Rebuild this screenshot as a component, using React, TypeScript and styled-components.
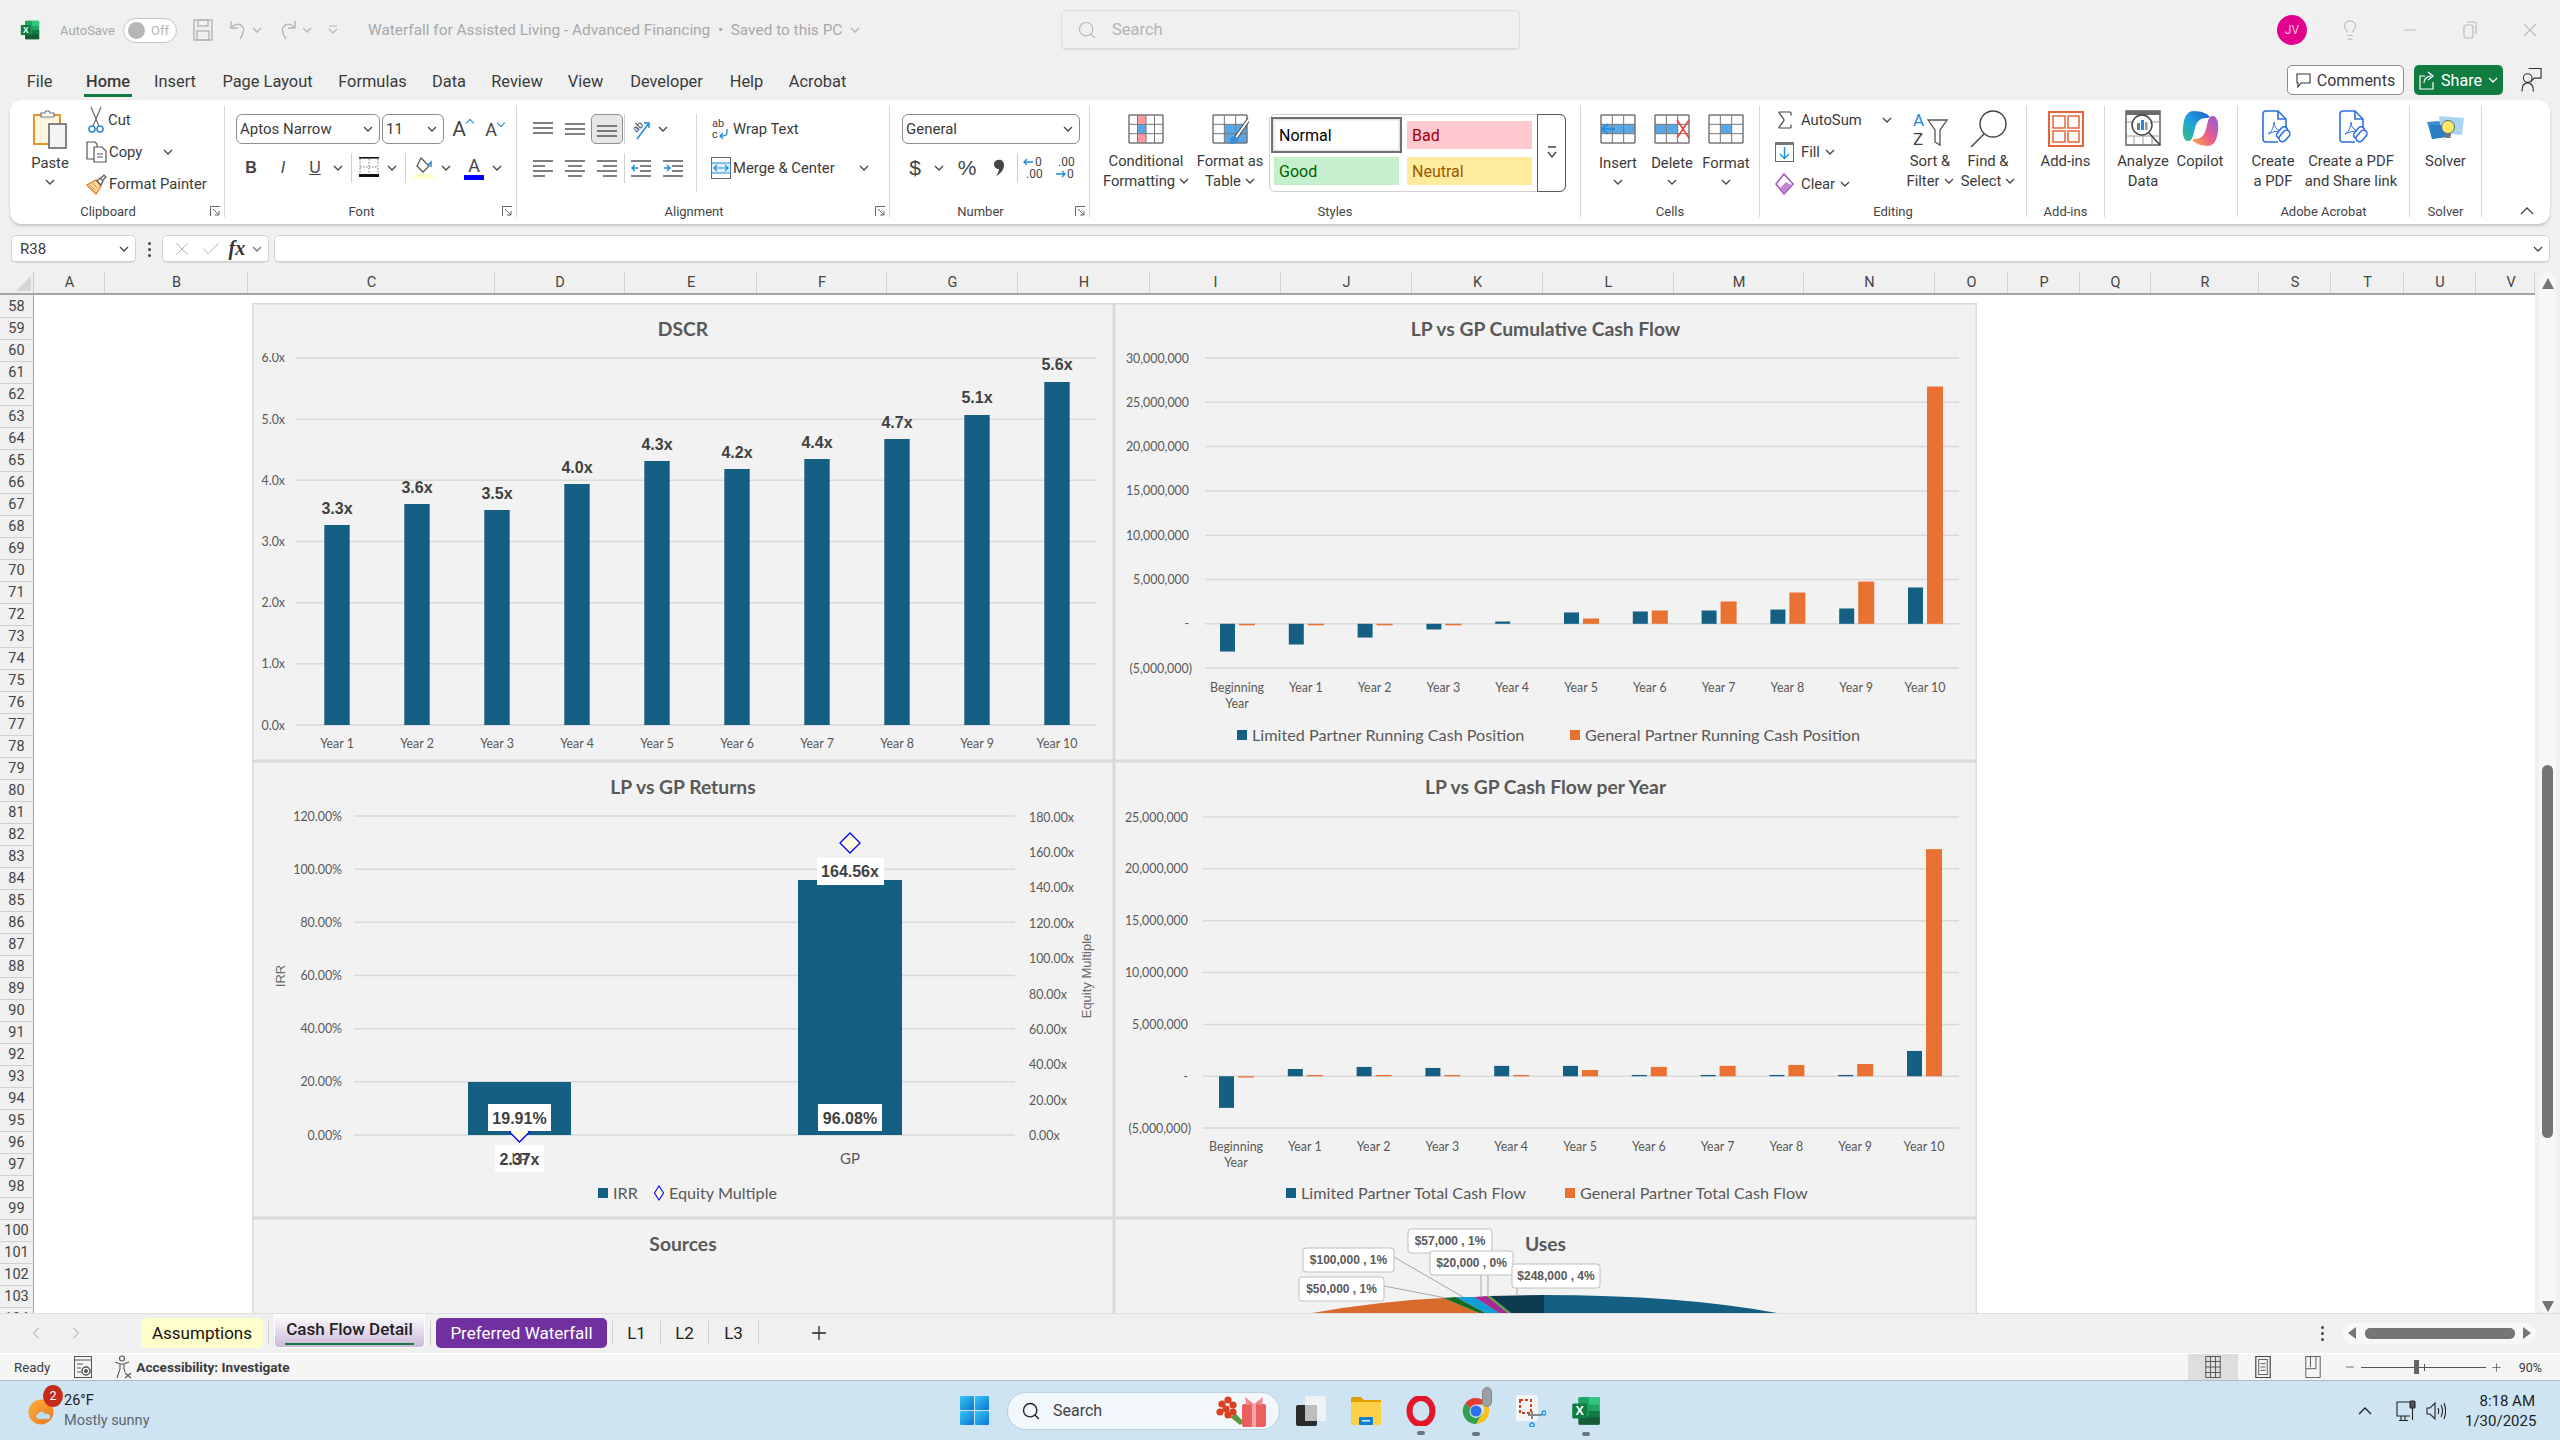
import React from 'react';
import styled, { createGlobalStyle } from 'styled-components';
import { Search, X, Check, Minus, Plus, ChevronLeft, ChevronRight, Lightbulb, Sigma } from 'lucide-react';

const ui = '"Roboto", "Liberation Sans", sans-serif';
const chartFont = '"Lato", "Liberation Sans", sans-serif';
const labelFont = '"Liberation Sans", Arial, sans-serif';

const colors = {
  chrome: '#f0f0f0',
  ink: '#3b3b3b',
  faded: '#a8a8a8',
  line: '#d4d4d4',
  blue: '#156082',
  orange: '#e97132',
  panel: '#f2f2f2',
  grid: '#d9d9d9',
  chartText: '#595959',
  green: '#107c41',
};

const GlobalStyle = createGlobalStyle`
  html, body { margin: 0; padding: 0; background: ${colors.chrome}; }
  * { box-sizing: border-box; }
`;

/* ---------- icons ---------- */

const Chev: React.FC<{ color?: string }> = ({ color = '#444' }) => (
  <svg width="10" height="6" viewBox="0 0 10 6" fill="none">
    <path d="M1 1l4 4 4-4" stroke={color} strokeWidth="1.3" />
  </svg>
);

const ExcelLogo: React.FC<{ size: number }> = ({ size }) => (
  <svg width={size} height={size} viewBox="0 0 24 24">
    <rect x="6" y="1" width="17" height="22" rx="1.5" fill="#21a366" />
    <rect x="14" y="1" width="9" height="6" fill="#33c481" />
    <rect x="6" y="1" width="8" height="6" fill="#21a366" />
    <rect x="14" y="12" width="9" height="6" fill="#107c41" />
    <rect x="6" y="17" width="17" height="6" rx="1" fill="#185c37" />
    <rect x="1" y="6" width="12" height="12" rx="1" fill="#107c41" />
    <text x="7" y="15.5" fill="#fff" fontSize="10" fontWeight="700" fontFamily={labelFont} textAnchor="middle">X</text>
  </svg>
);

const SaveIcon = () => (
  <svg width="20" height="22" viewBox="0 0 20 22" fill="none" stroke="#b5b5b5" strokeWidth="1.4">
    <rect x="1" y="1" width="18" height="20" />
    <rect x="5" y="1" width="10" height="6" />
    <rect x="4" y="12" width="12" height="9" />
  </svg>
);

const UndoIcon: React.FC<{ flip?: boolean }> = ({ flip }) => (
  <svg width="18" height="22" viewBox="0 0 18 22" fill="none" stroke="#b5b5b5" strokeWidth="1.4">
    <g transform={flip ? 'translate(18 0) scale(-1 1)' : undefined}>
      <path d="M2 2v7h7" />
      <path d="M2 9c3-4 8-5 11-2 3 3 2 7-2 13" />
    </g>
  </svg>
);

const CustomizeIcon = () => (
  <svg width="10" height="10" viewBox="0 0 10 10" fill="none" stroke="#b5b5b5" strokeWidth="1.2">
    <path d="M1 1h8M1 4l4 4 4-4" />
  </svg>
);

const ClipboardIcon = () => (
  <svg width="36" height="40" viewBox="0 0 36 40">
    <rect x="2" y="6" width="26" height="29" fill="#fff6df" stroke="#e8942c" strokeWidth="2" />
    <path d="M9 7V4h4c0-3 5-3 5 0h4v4H9z" fill="#fff" stroke="#777" strokeWidth="1.2" />
    <rect x="17" y="15" width="17" height="24" fill="#f4f4f4" stroke="#666" strokeWidth="1.6" />
  </svg>
);

const CutIcon = () => (
  <svg width="16" height="28" viewBox="0 0 16 28" fill="none">
    <path d="M3 1l8 19M13 1L5 20" stroke="#666" strokeWidth="1.2" />
    <circle cx="4" cy="23" r="3" stroke="#2b88d8" strokeWidth="1.6" />
    <circle cx="12" cy="23" r="3" stroke="#2b88d8" strokeWidth="1.6" />
  </svg>
);

const CopyIcon = () => (
  <svg width="21" height="22" viewBox="0 0 21 22" fill="#fff" stroke="#555" strokeWidth="1.2">
    <path d="M1 1h8l2 2v15H1z" />
    <path d="M8 6h8l4 4v11H8z" />
    <path d="M11 13h6M11 16h6" />
  </svg>
);

const PainterIcon = () => (
  <svg width="22" height="22" viewBox="0 0 22 22" fill="none">
    <path d="M1 12l9-5 5 6-5 8z" fill="#fbd9a6" stroke="#e8842c" strokeWidth="1.4" />
    <path d="M4 12l5 5M7 10l4 5" stroke="#e8842c" />
    <path d="M11 8l3-3 3 3-2 4zM15 5l3-3 2 2-3 3" fill="#fff" stroke="#555" strokeWidth="1.2" />
  </svg>
);

const Launcher = () => (
  <svg width="11" height="11" viewBox="0 0 11 11" fill="none" stroke="#666">
    <path d="M.5 10V.5H10" />
    <path d="M3 3l6 6M9 5v4H5" />
  </svg>
);

const BorderIcon = () => (
  <svg width="20" height="22" viewBox="0 0 20 22" fill="none">
    <path d="M1 1h18M1 10h18M10 2v15M1 2v15M19 2v15" stroke="#777" strokeDasharray="1.5 1.5" />
    <rect x="0" y="17" width="20" height="3" fill="#111" />
    <rect x="0" y="0" width="20" height="1.5" fill="#111" />
  </svg>
);

const FillIcon = () => (
  <svg width="20" height="24" viewBox="0 0 20 24" fill="none">
    <path d="M7 2l8 8-6 6-6-6z" stroke="#555" strokeWidth="1.3" fill="#fff" />
    <path d="M14 9l3-3v5" stroke="#2b88d8" strokeWidth="1.5" />
    <rect x="0" y="18" width="20" height="5" fill="#ffffc8" />
  </svg>
);

const AlignLines: React.FC<{ rows: [number, number][]; arrow?: 'in' | 'out' }> = ({ rows, arrow }) => (
  <svg width="20" height="20" viewBox="0 0 20 20" fill="none">
    {rows.map(([y, kind], i) => {
      const x1 = kind === 1 ? 0 : kind === 2 ? 3 : kind === 3 ? 6 : kind === 4 ? 9 : 0;
      const x2 = kind === 1 ? 12 : kind === 2 ? 17 : 20;
      return <path key={i} d={`M${x1} ${y}H${x2}`} stroke="#555" strokeWidth="1.5" />;
    })}
    {arrow === 'out' && <path d="M7 10H1M4 7l-3 3 3 3" stroke="#1e8ad8" strokeWidth="1.4" />}
    {arrow === 'in' && <path d="M1 10h6M4 7l3 3-3 3" stroke="#1e8ad8" strokeWidth="1.4" />}
  </svg>
);

const OrientIcon = () => (
  <svg width="24" height="26" viewBox="0 0 24 26" fill="none">
    <text x="9" y="14" fontSize="10" fontFamily={ui} fill="#444" transform="rotate(-45 9 11)" textAnchor="middle">ab</text>
    <path d="M8 23L20 7M15 7h5v5" stroke="#1e8ad8" strokeWidth="1.5" />
  </svg>
);

const WrapIcon = () => (
  <svg width="20" height="26" viewBox="0 0 20 26" fill="none">
    <text x="1" y="11" fontSize="11" fontFamily={ui} fill="#444">ab</text>
    <text x="1" y="22" fontSize="11" fontFamily={ui} fill="#444">c</text>
    <path d="M16 13v4c0 3-3 3-6 3M12 17l-3 3 3 3" stroke="#1e8ad8" strokeWidth="1.3" />
  </svg>
);

const MergeIcon = () => (
  <svg width="20" height="22" viewBox="0 0 20 22" fill="none">
    <rect x=".5" y=".5" width="19" height="21" fill="#fff" stroke="#666" />
    <rect x=".5" y="6" width="19" height="10" fill="#e1f0fb" stroke="#1e8ad8" />
    <path d="M3 11h14M6 8l-3 3 3 3M14 8l3 3-3 3" stroke="#1e8ad8" strokeWidth="1.2" />
  </svg>
);

const CommaIcon = () => (
  <svg width="12" height="18" viewBox="0 0 12 18">
    <path d="M5 1c4-1 6 2 6 5 0 5-4 9-8 11 2-3 3-5 3-7-3 0-5-2-5-5 0-2 2-4 4-4z" fill="#444" />
  </svg>
);

type GridCell = [number, number, string];
const SheetGlyph: React.FC<{ cells?: GridCell[]; w?: number; h?: number; cols?: number; children?: React.ReactNode }> = ({
  cells = [], w = 34, h = 28, cols = 5, children,
}) => {
  const cw = w / cols;
  const rh = h / 3;
  return (
    <svg width={w + 4} height={h + 2} viewBox={`-2 -1 ${w + 4} ${h + 2}`} fill="none">
      <rect width={w} height={h} fill="#fff" />
      {cells.map(([c, r, fill], i) => (
        <rect key={i} x={c * cw} y={r * rh} width={cw} height={rh} fill={fill} />
      ))}
      {Array.from({ length: cols + 1 }, (_, i) => (
        <path key={i} d={`M${i * cw} 0V${h}`} stroke="#777" strokeWidth={i === 0 || i === cols ? 1.5 : 1} />
      ))}
      {[0, 1, 2, 3].map((i) => (
        <path key={i} d={`M0 ${i * rh}H${w}`} stroke="#777" strokeWidth={i === 0 || i === 3 ? 1.5 : 1} />
      ))}
      {children}
    </svg>
  );
};

const BrushOverlay = () => (
  <g>
    <path d="M36 4L22 24" stroke="#555" strokeWidth="4" />
    <path d="M36 4L22 24" stroke="#fff" strokeWidth="2" />
    <path d="M22 21c-4 0-6 3-5 8 4 1 8-1 9-5z" fill="#3f8fd8" />
  </g>
);

const AddInsIcon = () => (
  <svg width="36" height="36" viewBox="0 0 36 36" fill="none" stroke="#e8653a">
    <rect x="1" y="1" width="34" height="34" strokeWidth="2" fill="#fff" />
    <rect x="5" y="5" width="12" height="12" strokeWidth="1.5" />
    <rect x="20" y="5" width="11" height="12" strokeWidth="1.5" />
    <rect x="5" y="20" width="12" height="11" strokeWidth="1.5" />
    <rect x="20" y="20" width="11" height="11" strokeWidth="1.5" />
  </svg>
);

const AnalyzeIcon = () => (
  <svg width="37" height="37" viewBox="0 0 37 37" fill="none">
    <rect x="1" y="1" width="34" height="34" fill="#fff" stroke="#6b6b6b" strokeWidth="1.6" />
    <rect x="1" y="1" width="34" height="4" fill="#6b6b6b" />
    <path d="M1 12h34M1 26h34M9 26v9M18 26v9M27 26v9" stroke="#999" />
    <circle cx="17" cy="15" r="10" fill="#fff" stroke="#444" strokeWidth="1.5" />
    <rect x="12" y="13" width="3" height="7" fill="#777" />
    <rect x="16" y="10" width="3" height="10" fill="#2b88d8" />
    <rect x="20" y="12" width="2.5" height="8" fill="#999" />
    <path d="M24 23l11 12" stroke="#444" strokeWidth="1.6" />
  </svg>
);

const CopilotIcon = () => (
  <svg width="37" height="37" viewBox="0 0 37 37">
    <defs>
      <linearGradient id="cpA" x1="0" y1="1" x2="1" y2="0">
        <stop offset="0" stopColor="#36c17a" />
        <stop offset=".5" stopColor="#1f9fe0" />
        <stop offset="1" stopColor="#2355c8" />
      </linearGradient>
      <linearGradient id="cpB" x1="0" y1="1" x2="1" y2="0">
        <stop offset="0" stopColor="#f6b73c" />
        <stop offset=".45" stopColor="#ef5f8a" />
        <stop offset="1" stopColor="#8a5be0" />
      </linearGradient>
    </defs>
    <path d="M12 1c-7 0-10 6-11 16-1 8 1 14 5 14 5 0 5-6 7-13 2-7 5-10 12-10l3-1C26 4 20 1 12 1z" fill="url(#cpA)" />
    <path d="M25 36c7 0 10-6 11-15 1-8-1-15-5-15-5 0-5 6-7 13-2 7-5 10-12 10l-2 1c3 3 9 6 15 6z" fill="url(#cpB)" />
  </svg>
);

const PdfLinkIcon = () => (
  <svg width="32" height="37" viewBox="0 0 32 37" fill="none" stroke="#2d6fe0" strokeWidth="1.6">
    <path d="M16 32H4c-2 0-3-1-3-3V4c0-2 1-3 3-3h12l8 8v9" fill="#fff" />
    <path d="M16 1v8h8" />
    <path d="M6 24c4-2 6-8 6-12 0 5 3 8 7 9-5 0-9 1-13 3z" strokeWidth="1" />
    <rect x="17" y="16" width="7" height="13" rx="3.5" transform="rotate(40 20 22)" fill="#fff" />
    <rect x="22" y="24" width="7" height="13" rx="3.5" transform="rotate(40 25 30) translate(-5 -2)" fill="#fff" />
  </svg>
);

const SolverIcon = () => (
  <svg width="38" height="28" viewBox="0 0 38 28">
    <path d="M0 7l12-1 2 2 10-1v14l-19 3z" fill="#3d8fd1" />
    <path d="M12 1l25 2-2 17-21-2z" fill="#a9d4f2" />
    <path d="M3 10h17v12L5 24z" fill="#2b7cc2" />
    <circle cx="21" cy="12" r="6.5" fill="#fbe96a" stroke="#666" />
    <rect x="18.5" y="18" width="5" height="5" fill="#777" />
  </svg>
);

const SortIcon = () => (
  <svg width="36" height="37" viewBox="0 0 36 37" fill="none">
    <text x="1" y="16" fontSize="17" fontFamily={ui} fill="#1e8ad8">A</text>
    <text x="1" y="35" fontSize="17" fontFamily={ui} fill="#444">Z</text>
    <path d="M16 10h19l-7 10v15l-5-3V20z" stroke="#555" strokeWidth="1.3" fill="#fff" />
  </svg>
);

const FindIcon = () => (
  <svg width="37" height="38" viewBox="0 0 37 38" fill="none" stroke="#444" strokeWidth="1.4">
    <circle cx="23" cy="14" r="13" />
    <path d="M14 24L1 37" />
  </svg>
);

const FillDownIcon = () => (
  <svg width="19" height="20" viewBox="0 0 19 20" fill="none">
    <rect x=".5" y=".5" width="18" height="19" stroke="#666" fill="#fff" />
    <rect x="0" y="0" width="19" height="3" fill="#777" />
    <path d="M9.5 5v11M5 12l4.500 4.500L14 12" stroke="#1e8ad8" strokeWidth="1.4" />
  </svg>
);

const ClearIcon = () => (
  <svg width="19" height="22" viewBox="0 0 19 22">
    <path d="M9 1l9 10-9 10L1 11z" fill="#fff" stroke="#a14fb4" strokeWidth="1.5" />
    <path d="M5 15l6-6 5 3-7 8z" fill="#c587d4" />
  </svg>
);

const CommentIcon: React.FC<{ size?: number }> = ({ size = 15 }) => (
  <svg width={size} height={size} viewBox="0 0 15 15" fill="none" stroke="#333" strokeWidth="1.1">
    <path d="M1 1h13v9H5l-3 4v-4H1z" />
  </svg>
);

const ShareIcon = () => (
  <svg width="16" height="20" viewBox="0 0 16 20" fill="none" stroke="#fff" strokeWidth="1.2">
    <path d="M6 6H1v13h13v-7" />
    <path d="M5 13c0-4 3-7 7-7M9 2l5 4-5 4" />
  </svg>
);

const PersonCommentIcon = () => (
  <svg width="22" height="26" viewBox="0 0 22 26" fill="none" stroke="#333" strokeWidth="1.2">
    <path d="M8 1h13v10h-7l-3 3v-3" />
    <circle cx="7" cy="11" r="4.5" fill="#f0f0f0" />
    <path d="M1 25c0-5 2-9 6-9s6 4 6 9" />
  </svg>
);

const MacroIcon = () => (
  <svg width="18" height="22" viewBox="0 0 18 22" fill="none" stroke="#555">
    <rect x=".5" y=".5" width="17" height="21" />
    <path d="M0 4h18M3 8h6M3 12h4M3 16h4" />
    <circle cx="12" cy="15" r="4" strokeWidth="1.5" />
    <circle cx="12" cy="15" r="1.5" fill="#555" />
  </svg>
);

const AccessIcon = () => (
  <svg width="18" height="24" viewBox="0 0 18 24" fill="none" stroke="#555" strokeWidth="1.1">
    <circle cx="8" cy="3.5" r="2.5" />
    <path d="M1 7l5 2h4l5-2M6 9v5l-3 9M10 9v5l1 3" />
    <path d="M11 18l6 5M17 18l-6 5" />
  </svg>
);

const ViewGrid = () => (
  <svg width="18" height="26" viewBox="0 0 18 26" fill="none" stroke="#444">
    <rect x=".5" y=".5" width="17" height="25" />
    <path d="M6 0v26M12 0v26M0 6.5h18M0 13h18M0 19.5h18" />
  </svg>
);

const ViewPage = () => (
  <svg width="18" height="26" viewBox="0 0 18 26" fill="none" stroke="#444">
    <rect x=".5" y=".5" width="17" height="25" strokeWidth="1.4" />
    <rect x="4" y="4" width="10" height="18" />
    <path d="M6 9h6M6 13h6M6 17h6" />
  </svg>
);

const ViewBreak = () => (
  <svg width="18" height="26" viewBox="0 0 18 26" fill="none" stroke="#444">
    <path d="M.5 15V.5h17v25H.5V15h12V0M6 0v13" />
  </svg>
);

const WeatherIcon = () => (
  <svg width="28" height="28" viewBox="0 0 28 28">
    <defs>
      <linearGradient id="sun" x1="0" y1="0" x2="1" y2="1">
        <stop offset="0" stopColor="#fcb13c" />
        <stop offset="1" stopColor="#f0761c" />
      </linearGradient>
    </defs>
    <circle cx="13" cy="15" r="12.5" fill="url(#sun)" />
    <path d="M11 22c-3 0-4-4-1-5 1-3 6-3 7 0 3-1 6 1 5 4-1 1-2 1-3 1z" fill="#c3def2" stroke="#8db4d4" strokeWidth=".5" />
  </svg>
);

const WinIcon = () => (
  <svg width="29" height="29" viewBox="0 0 29 29">
    <defs>
      <linearGradient id="win" x1="0" y1="0" x2="1" y2="1">
        <stop offset="0" stopColor="#36c9f6" />
        <stop offset="1" stopColor="#0a74d4" />
      </linearGradient>
    </defs>
    <rect x="0" y="0" width="14" height="14" fill="url(#win)" rx="1" />
    <rect x="15" y="0" width="14" height="14" fill="url(#win)" rx="1" />
    <rect x="0" y="15" width="14" height="14" fill="url(#win)" rx="1" />
    <rect x="15" y="15" width="14" height="14" fill="url(#win)" rx="1" />
  </svg>
);

const GiftFlowers = () => (
  <svg width="50" height="32" viewBox="0 0 50 32">
    <path d="M14 22l10 8 4-3-8-8z" fill="#5a9a3a" />
    {[[6, 9], [12, 5], [17, 10], [10, 14], [4, 17], [17, 17], [12, 20]].map(([x, y], i) => (
      <circle key={i} cx={x} cy={y} r="3.6" fill="#d8401f" />
    ))}
    <rect x="26" y="9" width="24" height="23" rx="2" fill="#ea6060" />
    <rect x="36" y="9" width="4" height="23" fill="#f5a5a5" />
    <path d="M38 9l-9-7 1 8zM38 9l9-7-1 8z" fill="#f08a8a" />
  </svg>
);

const TaskView = () => (
  <svg width="30" height="30" viewBox="0 0 30 30">
    <rect x="0" y="9" width="21" height="21" rx="2" fill="#2b2b2b" />
    <rect x="9" y="0" width="21" height="25" rx="2" fill="#f2f2f2" opacity=".92" />
    <rect x="9" y="9" width="12" height="16" fill="#bdbdbd" />
  </svg>
);

const FolderIcon = () => (
  <svg width="30" height="28" viewBox="0 0 30 28">
    <path d="M0 2c0-1 1-2 2-2h8l3 3h17v3H0z" fill="#e0a000" />
    <rect x="0" y="5" width="30" height="23" rx="1.5" fill="#ffd04a" />
    <rect x="8" y="20" width="14" height="8" rx="1" fill="#0f7fd0" />
    <rect x="11" y="23" width="8" height="1.6" fill="#cfe9fb" />
  </svg>
);

const OperaIcon = () => (
  <svg width="30" height="30" viewBox="0 0 30 30" fill="none">
    <ellipse cx="15" cy="15" rx="11.5" ry="13" stroke="#e3162a" strokeWidth="6" />
  </svg>
);

const ChromeIcon = () => (
  <svg width="30" height="32" viewBox="0 0 30 32">
    <path d="M15 3a13 13 0 0 1 11.3 6.5H15a6 6 0 0 0-5.5 3.5L4.2 8.5A13 13 0 0 1 15 3z" fill="#e33b2e" />
    <path d="M26.3 9.5A13 13 0 0 1 15 29l5.2-9a6 6 0 0 0 0-10.5z" fill="#fbc116" />
    <path d="M4.2 8.500A13 13 0 0 0 15 29l5.2-9a6 6 0 0 1-10.7-7z" fill="#2fa14f" />
    <circle cx="15" cy="16" r="5.500" fill="#2f6fe8" />
  </svg>
);

const SnipIcon = () => (
  <svg width="30" height="32" viewBox="0 0 30 32" fill="none">
    <rect x="0" y="0" width="22" height="26" rx="2" fill="#f4f4f4" />
    <rect x="4" y="5" width="11" height="13" stroke="#d13c1c" strokeWidth="2" strokeDasharray="3 2" />
    <path d="M16 16v8M12 20h14" stroke="#888" strokeWidth="2" />
    <circle cx="28" cy="18" r="2" stroke="#1e9be8" strokeWidth="1.5" />
    <circle cx="16" cy="30" r="2" stroke="#1e9be8" strokeWidth="1.5" />
  </svg>
);

const NetworkIcon = () => (
  <svg width="20" height="22" viewBox="0 0 20 22" fill="none" stroke="#222" strokeWidth="1.1">
    <path d="M14 2H1v14h13M5 16v4M9 16v4M3 20.500h9" />
    <rect x="14" y="1" width="5" height="7" rx="1" fill="#555" />
    <path d="M16.500 8v12" />
  </svg>
);

const SpeakerIcon = () => (
  <svg width="20" height="22" viewBox="0 0 20 22" fill="none" stroke="#222" strokeWidth="1.1">
    <path d="M1 8v6h3l5 5V3L4 8z" />
    <path d="M12 8c1 2 1 4 0 6M15 5c2 4 2 8 0 12M18 3c2 5 2 11 0 16" />
  </svg>
);

/* ---------- window chrome ---------- */

const Screen = styled.div`
  width: 2560px;
  height: 1440px;
  overflow: hidden;
  display: flex;
  flex-direction: column;
  background: ${colors.chrome};
  font-family: ${ui};
  color: ${colors.ink};
`;

const TitleBar = styled.div`
  height: 60px;
  flex: none;
  display: grid;
  grid-template-columns: 1061px 459px 1fr;
  align-items: center;
`;

const TitleLeft = styled.div`
  display: flex;
  align-items: center;
  padding: 0 0 0 20px;
  color: ${colors.faded};
  font-size: 13px;
`;

const Fixed = styled.div<{ $w: number; $ml?: number }>`
  flex: none;
  width: ${(p) => p.$w}px;
  margin-left: ${(p) => p.$ml || 0}px;
  display: flex;
  align-items: center;
  justify-content: center;
  white-space: nowrap;
`;

const Toggle = styled.div`
  flex: none;
  width: 54px;
  height: 25px;
  margin-left: 8px;
  border: 1.5px solid #c4c4c4;
  border-radius: 13px;
  background: #fff;
  display: flex;
  align-items: center;
  padding-left: 4px;
  gap: 6px;
  font-size: 13px;
  color: #b5b5b5;
  &::before {
    content: '';
    width: 17px;
    height: 17px;
    border-radius: 50%;
    background: #b5b5b5;
  }
`;

const DocName = styled.div`
  margin-left: 27px;
  white-space: nowrap;
  font-size: 15.4px;
  display: flex;
  align-items: center;
  gap: 8px;
`;

const SearchBox = styled.div`
  height: 40px;
  margin-top: 0;
  border: 1.5px solid #dcdcdc;
  border-bottom-width: 2.5px;
  border-radius: 5px;
  display: flex;
  align-items: center;
  padding-left: 15px;
  gap: 15px;
  color: #b4b4b4;
  font-size: 16.5px;
`;

const TitleRight = styled.div`
  display: flex;
  align-items: center;
  padding-left: 757px;
  color: #bcbcbc;
`;

const Avatar = styled.div`
  flex: none;
  width: 30px;
  height: 30px;
  border-radius: 50%;
  background: #e3008c;
  color: #f6c4e4;
  font-size: 12px;
  display: flex;
  align-items: center;
  justify-content: center;
  margin-right: 13px;
`;

const WinControl = styled.div`
  flex: none;
  width: 60px;
  display: flex;
  justify-content: center;
`;

const TabBar = styled.div`
  height: 40px;
  flex: none;
  display: flex;
  padding-left: 15px;
`;

const MenuTab = styled.div<{ $w: number; $on?: boolean }>`
  position: relative;
  flex: none;
  width: ${(p) => p.$w}px;
  display: flex;
  align-items: center;
  justify-content: center;
  padding-top: 2px;
  font-size: 16.4px;
  font-weight: ${(p) => (p.$on ? 500 : 400)};
  white-space: nowrap;
  ${(p) =>
    p.$on &&
    `&::after {
      content: '';
      position: absolute;
      left: 50%;
      margin-left: -24px;
      bottom: 3px;
      width: 48px;
      height: 3px;
      background: ${colors.green};
    }`}
`;

const TabActions = styled.div`
  margin-left: auto;
  padding: 5px 18px 5px 0;
  display: flex;
  align-items: stretch;
`;

const CommentsButton = styled.div`
  width: 117px;
  background: #fff;
  border: 1px solid #8c8c8c;
  border-radius: 5px;
  display: flex;
  align-items: center;
  justify-content: center;
  gap: 6px;
  font-size: 16px;
`;

const ShareButton = styled.div`
  width: 89px;
  margin-left: 10px;
  background: ${colors.green};
  border-radius: 5px;
  color: #fff;
  display: flex;
  align-items: center;
  justify-content: center;
  gap: 6px;
  font-size: 16px;
`;

const PersonSlot = styled.div`
  width: 21px;
  margin-left: 18px;
  display: flex;
  align-items: center;
`;

/* ---------- ribbon ---------- */

const Ribbon = styled.div`
  flex: none;
  height: 124px;
  margin: 0 10px;
  padding: 6px 0 7px;
  background: #fff;
  border-radius: 12px;
  box-shadow: 0 2px 3px rgba(0, 0, 0, 0.18);
  display: flex;
  font-size: 14.8px;
`;

const Group = styled.div<{ $w: number; $plain?: boolean }>`
  position: relative;
  flex: none;
  width: ${(p) => p.$w}px;
  display: flex;
  flex-direction: column;
  border-right: ${(p) => (p.$plain ? 'none' : '1px solid #d6d6d6')};
`;

const GroupBody = styled.div<{ $pl?: number; $center?: boolean }>`
  flex: 1;
  min-height: 0;
  display: flex;
  padding-left: ${(p) => p.$pl || 0}px;
  justify-content: ${(p) => (p.$center ? 'center' : 'flex-start')};
`;

const GroupLabel = styled.div<{ $launch?: boolean }>`
  flex: none;
  height: 10px;
  line-height: 10px;
  font-size: 13px;
  text-align: center;
  padding-right: ${(p) => (p.$launch ? 18 : 0)}px;
  color: #444;
`;

const LauncherSlot = styled.div`
  position: absolute;
  right: 3px;
  bottom: 0;
  line-height: 0;
`;

const Large = styled.div<{ $w: number; $ml?: number }>`
  flex: none;
  width: ${(p) => p.$w}px;
  margin-left: ${(p) => p.$ml || 0}px;
  display: flex;
  flex-direction: column;
  align-items: center;
  white-space: nowrap;
`;

const LargeIcon = styled.div<{ $nudge?: number }>`
  height: 45px;
  display: flex;
  align-items: center;
  justify-content: center;
  padding-left: ${(p) => p.$nudge || 0}px;
`;

const LargeText = styled.div<{ $drop?: boolean }>`
  line-height: 20px;
  text-align: center;
  display: flex;
  align-items: center;
  gap: 4px;
  margin-top: ${(p) => (p.$drop ? 2 : 0)}px;
`;

const LargeChev = styled.div`
  height: 18px;
  display: flex;
  align-items: center;
`;

const SmallStack = styled.div`
  flex: none;
  display: flex;
  flex-direction: column;
  margin-top: -2px;
`;

const SmallRow = styled.div`
  height: 32px;
  display: flex;
  align-items: center;
`;

const SmallText = styled.div<{ $w?: number }>`
  ${(p) => (p.$w ? `width: ${p.$w}px;` : '')}
  white-space: nowrap;
  display: flex;
  align-items: center;
  gap: 5px;
`;

const Rows = styled.div`
  flex: none;
  display: flex;
  flex-direction: column;
  gap: 9px;
  padding-top: 8px;
`;

const CtlRow = styled.div`
  height: 30px;
  display: flex;
  align-items: center;
`;

const Slot = styled.div<{ $w: number; $ml?: number; $active?: boolean; $pr?: number }>`
  flex: none;
  width: ${(p) => p.$w}px;
  height: 30px;
  margin-left: ${(p) => p.$ml || 0}px;
  padding-right: ${(p) => p.$pr || 0}px;
  display: flex;
  align-items: center;
  justify-content: center;
  white-space: nowrap;
  ${(p) =>
    p.$active &&
    `background: #e6e6e6; border: 1px solid #8f8f8f; border-radius: 5px;`}
`;

const ThinRule = styled.div`
  flex: none;
  width: 1px;
  height: 30px;
  background: #d0d0d0;
`;

const TallRule = styled.div`
  flex: none;
  width: 1px;
  height: 78px;
  margin: 8px 11px 0 7px;
  background: #d6d6d6;
`;

const Dropdown = styled.div<{ $w: number; $ml?: number }>`
  flex: none;
  width: ${(p) => p.$w}px;
  height: 30px;
  margin-left: ${(p) => p.$ml || 0}px;
  border: 1px solid #8c8c8c;
  border-radius: 6px;
  display: flex;
  align-items: center;
  justify-content: space-between;
  padding: 0 6px 0 3px;
  font-size: 15px;
`;

const Glyph = styled.span<{ $b?: boolean; $i?: boolean; $u?: boolean; $size?: number }>`
  font-family: ${labelFont};
  font-size: ${(p) => p.$size || 15}px;
  font-weight: ${(p) => (p.$b ? 700 : 400)};
  font-style: ${(p) => (p.$i ? 'italic' : 'normal')};
  text-decoration: ${(p) => (p.$u ? 'underline' : 'none')};
  color: #444;
`;

const FontUp = styled.span`
  position: relative;
  font-size: 21px;
  color: #444;
  &::after {
    content: '';
    position: absolute;
    right: -7px;
    top: 3px;
    width: 5px;
    height: 5px;
    border-left: 1.3px solid #1e8ad8;
    border-top: 1.3px solid #1e8ad8;
    transform: rotate(45deg);
  }
`;

const FontDown = styled(FontUp)`
  font-size: 18px;
  &::after {
    transform: rotate(225deg);
    top: 1px;
  }
`;

const ColorA = styled.div`
  width: 20px;
  display: flex;
  flex-direction: column;
  align-items: center;
  font-size: 18px;
  line-height: 18px;
  color: #444;
  &::after {
    content: '';
    width: 100%;
    height: 5px;
    background: #0000ff;
  }
`;

const Gallery = styled.div`
  flex: none;
  width: 297px;
  height: 78px;
  margin: 8px 0 0 4px;
  border: 1px solid #cfcfcf;
  border-radius: 6px;
  display: flex;
  justify-content: space-between;
`;

const StyleGrid = styled.div`
  display: grid;
  grid-template-columns: 131px 125px;
  grid-template-rows: 36px 28px;
  column-gap: 5px;
  row-gap: 4px;
  padding: 2px 0 0 1px;
`;

const StyleChip = styled.div<{ $bg: string; $fg: string; $normal?: boolean }>`
  display: flex;
  align-items: center;
  height: ${(p) => (p.$normal ? 36 : 28)}px;
  align-self: center;
  padding-left: ${(p) => (p.$normal ? 6 : 5)}px;
  background: ${(p) => p.$bg};
  color: ${(p) => p.$fg};
  font-size: 16px;
  ${(p) => (p.$normal ? 'border: 2px solid #707070; box-shadow: inset 0 0 0 1.5px #e2e2e2;' : '')}
`;

const GoodChip = styled(StyleChip)`
  margin: 0 3px;
`;

const GalleryMore = styled.div`
  width: 29px;
  margin: -1px -1px -1px 0;
  border: 1px solid #5a5a5a;
  border-radius: 0 6px 6px 0;
  display: flex;
  align-items: center;
  justify-content: center;
`;

const CollapseSlot = styled.div`
  position: absolute;
  right: 16px;
  bottom: 2px;
  line-height: 0;
`;

/* ---------- formula bar + sheet ---------- */

const FormulaBar = styled.div`
  flex: none;
  height: 28px;
  margin-top: 11px;
  padding: 0 10px 0 11px;
  display: flex;
  align-items: stretch;
`;

const FieldBox = styled.div<{ $w?: number }>`
  ${(p) => (p.$w ? `width: ${p.$w}px; flex: none;` : 'flex: 1;')}
  background: #fff;
  border: 1px solid #d4d4d4;
  border-bottom-width: 2px;
  border-radius: 5px;
  display: flex;
  align-items: center;
  justify-content: space-between;
  padding: 0 6px 0 8px;
  font-size: 15px;
`;

const VDots = styled.div<{ $w: number }>`
  flex: none;
  width: ${(p) => p.$w}px;
  display: flex;
  flex-direction: column;
  align-items: center;
  justify-content: center;
  gap: 3px;
  &::before, &::after, & > i {
    content: '';
    display: block;
    width: 3px;
    height: 3px;
    background: #444;
    border-radius: 50%;
  }
`;

const FxItalic = styled.span`
  font-family: "Liberation Serif", serif;
  font-style: italic;
  font-weight: 700;
  font-size: 20px;
  color: #333;
`;

const SheetRow = styled.div`
  flex: 1;
  min-height: 0;
  display: flex;
  margin-top: 9px;
`;

const SheetMain = styled.div`
  flex: none;
  width: 2535px;
  display: flex;
  flex-direction: column;
`;

const ColHeaders = styled.div`
  flex: none;
  height: 23px;
  display: flex;
  border-bottom: 2px solid #a6a6a6;
`;

const Corner = styled.div`
  flex: none;
  width: 34px;
  display: flex;
  align-items: flex-end;
  justify-content: flex-end;
  padding: 0 2px 2px 0;
  border-right: 1px solid #c8c8c8;
  &::after {
    content: '';
    width: 0;
    height: 0;
    border-left: 15px solid transparent;
    border-bottom: 15px solid #d6d6d6;
  }
`;

const ColHead = styled.div<{ $w: number; $pl?: number }>`
  flex: none;
  width: ${(p) => p.$w}px;
  padding-left: ${(p) => p.$pl || 1}px;
  display: flex;
  align-items: center;
  justify-content: center;
  border-right: 1px solid #d0d0d0;
  font-size: 14.5px;
  color: #444;
`;

const SheetBody = styled.div`
  flex: 1;
  min-height: 0;
  display: flex;
  overflow: hidden;
`;

const RowHeads = styled.div`
  flex: none;
  width: 34px;
  padding-top: 1px;
  border-right: 1px solid #a6a6a6;
  overflow: hidden;
`;

const RowHead = styled.div`
  height: 22px;
  border-bottom: 1px solid #d0d0d0;
  display: flex;
  align-items: center;
  justify-content: center;
  font-size: 14.5px;
  color: #444;
`;

const Canvas = styled.div`
  flex: 1;
  background: #fff;
  padding: 8px 0 0 218px;
  overflow: hidden;
  display: grid;
  grid-template-columns: 862px 863px;
  grid-template-rows: 458px 457px 200px;
  align-content: start;
  justify-content: start;
`;

const VScroll = styled.div`
  flex: none;
  width: 25px;
  padding: 0 4px 0;
  display: flex;
  flex-direction: column;
`;

const VTrack = styled.div`
  width: 17px;
  height: 1044px;
  border-radius: 9px;
  background: #f7f7f7;
  display: flex;
  flex-direction: column;
  align-items: center;
  padding-top: 6px;
`;

const VThumb = styled.div`
  width: 11px;
  height: 373px;
  margin-top: 476px;
  border-radius: 6px;
  background: #757575;
`;

const TriUp = styled.div`
  width: 0;
  height: 0;
  border-left: 6px solid transparent;
  border-right: 6px solid transparent;
  border-bottom: 11px solid #757575;
`;

const TriDown = styled(TriUp)`
  margin-top: 163px;
  border-bottom: none;
  border-top: 11px solid #757575;
`;

/* ---------- charts ---------- */

const Card = styled.div`
  position: relative;
  background: ${colors.panel};
  box-shadow: inset 0 0 0 1.5px ${colors.grid};
  display: flex;
  flex-direction: column;
  font-family: ${chartFont};
`;

const ChartTitle = styled.div`
  flex: none;
  height: 50px;
  display: flex;
  align-items: center;
  justify-content: center;
  font-size: 19.3px;
  font-weight: 700;
  color: ${colors.chartText};
`;

const Plot = styled.svg`
  flex: none;
  display: block;
`;

const AxisText = styled.text<{ $a?: string; $size?: number }>`
  font-family: ${chartFont};
  font-size: ${(p) => p.$size || 12.4}px;
  fill: ${colors.chartText};
  text-anchor: ${(p) => p.$a || 'middle'};
  dominant-baseline: central;
`;

const DataText = styled.text<{ $size?: number; $dim?: boolean }>`
  font-family: ${labelFont};
  font-weight: 700;
  font-size: ${(p) => p.$size || 16}px;
  fill: ${(p) => (p.$dim ? colors.chartText : '#404040')};
  text-anchor: middle;
  dominant-baseline: central;
`;

const RotatedText = styled.text`
  font-family: ${labelFont};
  font-size: 13px;
  fill: #6a6a6a;
  text-anchor: middle;
  dominant-baseline: central;
`;

const Legend = styled.div<{ $pl: number }>`
  flex: none;
  height: 40px;
  padding: 0 0 3px ${(p) => p.$pl}px;
  display: flex;
  align-items: center;
  font-size: 16.2px;
  color: ${colors.chartText};
`;

const LegendItem = styled.div<{ $w: number }>`
  flex: none;
  width: ${(p) => p.$w}px;
  display: flex;
  align-items: center;
  gap: 5px;
  white-space: nowrap;
`;

const Swatch = styled.span<{ $c: string }>`
  flex: none;
  width: 10px;
  height: 10px;
  background: ${(p) => p.$c};
`;

const PieOverlay = styled.svg`
  position: absolute;
  left: 0;
  top: 0;
`;

const YEARS = ['Year 1', 'Year 2', 'Year 3', 'Year 4', 'Year 5', 'Year 6', 'Year 7', 'Year 8', 'Year 9', 'Year 10'];

const DSCR = [
  [3.3, 525, 508], [3.6, 504, 487], [3.5, 510, 493], [4.0, 484, 467], [4.3, 461, 444],
  [4.2, 469, 452], [4.4, 459, 442], [4.7, 439, 422], [5.1, 415, 397], [5.6, 382, 364],
];

const DscrChart = () => (
  <Card>
    <ChartTitle>DSCR</ChartTitle>
    <Plot width={862} height={408} viewBox="252 353 862 408">
      {[0, 1, 2, 3, 4, 5, 6].map((t) => {
        const y = 725 - t * 61.17;
        return (
          <g key={t}>
            <path d={`M296 ${y}H1096`} stroke={colors.grid} strokeWidth="1.5" />
            <AxisText x={285} y={y} $a="end">{t}.0x</AxisText>
          </g>
        );
      })}
      {DSCR.map(([v, top, labelY], i) => {
        const cx = 337 + i * 80;
        return (
          <g key={i}>
            <rect x={cx - 12.7} y={top} width={25.4} height={725 - top} fill={colors.blue} />
            <DataText x={cx} y={labelY}>{v.toFixed(1)}x</DataText>
            <AxisText x={cx} y={743}>{YEARS[i]}</AxisText>
          </g>
        );
      })}
    </Plot>
  </Card>
);

interface CashChartProps {
  title: string;
  box: [number, number, number, number];
  gridX: [number, number];
  topY: number;
  step: number;
  max: number;
  labelX: number;
  center0: number;
  centerStep: number;
  lp: number[];
  gp: number[];
  catY: number;
  legendPl: number;
  legendW: number;
  legend: [string, string];
}

const CashChart: React.FC<CashChartProps> = ({
  title, box, gridX, topY, step, max, labelX, center0, centerStep, lp, gp, catY, legendPl, legendW, legend,
}) => {
  const ticks = Array.from({ length: max / 5 + 2 }, (_, i) => max - i * 5);
  const zero = topY + (max / 5) * step;
  const perM = step / 5;
  const bar = (v: number) => ({ y: v >= 0 ? zero - v * perM : zero, height: Math.abs(v) * perM });
  return (
    <Card>
      <ChartTitle>{title}</ChartTitle>
      <Plot width={box[2]} height={box[3]} viewBox={box.join(' ')}>
        {ticks.map((t) => {
          const y = topY + ((max - t) / 5) * step;
          const text = t === 0 ? '-' : t < 0 ? '(5,000,000)' : `${t},000,000`;
          return (
            <g key={t}>
              <path d={`M${gridX[0]} ${y}H${gridX[1]}`} stroke={colors.grid} strokeWidth="1.5" />
              <AxisText x={t < 0 ? labelX + 3 : labelX} y={y} $a="end">{text}</AxisText>
            </g>
          );
        })}
        {lp.map((v, i) => {
          const cx = center0 + i * centerStep;
          return (
            <g key={i}>
              <rect x={cx - 17} width={15} fill={colors.blue} {...bar(v)} />
              <rect x={cx + 2} width={16} fill={colors.orange} {...bar(gp[i])} />
              {i === 0 ? (
                <AxisText x={cx} y={catY}>
                  Beginning
                  <tspan x={cx} dy="16">Year</tspan>
                </AxisText>
              ) : (
                <AxisText x={cx} y={catY}>{YEARS[i - 1]}</AxisText>
              )}
            </g>
          );
        })}
      </Plot>
      <Legend $pl={legendPl}>
        <LegendItem $w={legendW}><Swatch $c={colors.blue} />{legend[0]}</LegendItem>
        <LegendItem $w={400}><Swatch $c={colors.orange} />{legend[1]}</LegendItem>
      </Legend>
    </Card>
  );
};

const Diamond: React.FC<{ cx: number; cy: number }> = ({ cx, cy }) => (
  <path
    d={`M${cx} ${cy - 10}L${cx + 10} ${cy}L${cx} ${cy + 10}L${cx - 10} ${cy}Z`}
    fill="#ffffe0"
    stroke="#0000ff"
    strokeWidth="1.3"
  />
);

const LabelBox: React.FC<{ x1: number; x2: number; y1: number; y2: number }> = ({ x1, x2, y1, y2 }) => (
  <rect x={x1} y={y1} width={x2 - x1} height={y2 - y1} fill="#fff" />
);

const ReturnsChart = () => (
  <Card>
    <ChartTitle>LP vs GP Returns</ChartTitle>
    <Plot width={862} height={363} viewBox="252 811 862 363">
      {[120, 100, 80, 60, 40, 20, 0].map((t, i) => {
        const y = 816 + i * 53.17;
        return (
          <g key={t}>
            <path d={`M354 ${y}H1015`} stroke={colors.grid} strokeWidth="1.5" />
            <AxisText x={342} y={y} $a="end">{t}.00%</AxisText>
          </g>
        );
      })}
      {[180, 160, 140, 120, 100, 80, 60, 40, 20, 0].map((t, i) => (
        <AxisText key={t} x={1029} y={817 + i * 35.4} $a="start">{t}.00x</AxisText>
      ))}
      <RotatedText x={280} y={976} transform="rotate(-90 280 976)">IRR</RotatedText>
      <RotatedText x={1086} y={976} transform="rotate(-90 1086 976)">Equity Multiple</RotatedText>
      <rect x={468} y={1082} width={103} height={53} fill={colors.blue} />
      <rect x={798} y={880} width={104} height={255} fill={colors.blue} />
      <Diamond cx={519.5} cy={1132} />
      <Diamond cx={850} cy={843} />
      <LabelBox x1={488} x2={551} y1={1104} y2={1131} />
      <DataText x={519.5} y={1118}>19.91%</DataText>
      <LabelBox x1={818} x2={882} y1={1104} y2={1131} />
      <DataText x={850} y={1118}>96.08%</DataText>
      <LabelBox x1={817} x2={884} y1={858} y2={885} />
      <DataText x={850} y={871}>164.56x</DataText>
      <LabelBox x1={495} x2={544} y1={1145} y2={1172} />
      <AxisText x={519.5} y={1158} $size={15}>LP</AxisText>
      <DataText x={519.5} y={1159}>2.37x</DataText>
      <AxisText x={850} y={1158} $size={15}>GP</AxisText>
    </Plot>
    <Legend $pl={346}>
      <LegendItem $w={56}><Swatch $c={colors.blue} />IRR</LegendItem>
      <LegendItem $w={140}>
        <svg width="10" height="20" viewBox="0 0 10 20">
          <path d="M5 3L9.500 10L5 17L.5 10Z" fill="#ffffe0" stroke="#0000ff" strokeWidth="1.1" />
        </svg>
        Equity Multiple
      </LegendItem>
    </Legend>
  </Card>
);

const CALLOUTS: [string, number, number, number, number][] = [
  ['$100,000 , 1%', 1303, 1394, 1248, 1272],
  ['$50,000 , 1%', 1299, 1384, 1277, 1301],
  ['$57,000 , 1%', 1408, 1492, 1229, 1253],
  ['$20,000 , 0%', 1430, 1513, 1251, 1275],
  ['$248,000 , 4%', 1512, 1600, 1264, 1288],
];

const UsesPie = () => (
  <PieOverlay width={863} height={95} viewBox="1114 1218 863 95">
    <path d="M1312 1313Q1380 1301 1443 1298L1479 1313Z" fill="#d96a2b" />
    <path d="M1443 1298L1456 1297L1486 1313L1479 1313Z" fill="#196b24" />
    <path d="M1456 1297L1474 1297L1499 1313L1486 1313Z" fill="#0f9ed5" />
    <path d="M1474 1297L1487 1296L1508 1313L1499 1313Z" fill="#a02b93" />
    <path d="M1487 1296L1490 1296L1511 1313L1508 1313Z" fill="#4ea72e" />
    <path d="M1490 1296L1544 1295L1544 1313L1511 1313Z" fill="#0e3a50" />
    <path d="M1544 1295Q1680 1295 1777 1313L1544 1313Z" fill={colors.blue} />
    <g stroke="#a6a6a6" fill="none">
      <path d="M1481 1275V1297M1488 1275V1296M1394 1257L1463 1297M1384 1286L1446 1298M1517 1288V1296" />
    </g>
    {CALLOUTS.map(([t, x1, x2, y1, y2]) => (
      <g key={t}>
        <rect x={x1} y={y1} width={x2 - x1} height={y2 - y1} rx="3" fill="#fff" stroke="#bfbfbf" />
        <DataText x={(x1 + x2) / 2} y={(y1 + y2) / 2} $size={12} $dim>{t}</DataText>
      </g>
    ))}
  </PieOverlay>
);

/* ---------- bottom bars ---------- */

const SheetTabs = styled.div`
  flex: none;
  height: 40px;
  display: flex;
  align-items: flex-start;
  font-size: 17px;
  color: #222;
  border-top: 1px solid #dedede;
`;

const NavSlot = styled.div`
  flex: none;
  width: 40px;
  height: 38px;
  display: flex;
  align-items: center;
  justify-content: center;
  color: #a0a0a0;
`;

const NavGroup = styled.div`
  flex: none;
  display: flex;
  padding-left: 16px;
  margin-right: 45px;
`;

const SheetTab = styled.div<{ $w: number; $bg: string; $fg: string }>`
  flex: none;
  width: ${(p) => p.$w}px;
  height: 30px;
  margin-top: 4px;
  border-radius: 5px;
  background: ${(p) => p.$bg};
  color: ${(p) => p.$fg};
  display: flex;
  align-items: center;
  justify-content: center;
  white-space: nowrap;
`;

const ActiveTab = styled.div`
  position: relative;
  flex: none;
  width: 151px;
  height: 34px;
  border: 1px solid #fff;
  border-top: none;
  border-radius: 0 0 5px 5px;
  background: linear-gradient(#ffffff, #cdb8dc);
  display: flex;
  justify-content: center;
  padding-top: 5px;
  font-weight: 500;
  white-space: nowrap;
  &::after {
    content: '';
    position: absolute;
    left: 10px;
    right: 10px;
    bottom: 2px;
    height: 2px;
    background: ${colors.green};
  }
`;

const TabRule = styled.div`
  flex: none;
  width: 1px;
  height: 24px;
  margin: 7px 5px 0;
  background: #cfcfcf;
`;

const PlainTab = styled.div<{ $w: number }>`
  flex: none;
  width: ${(p) => p.$w}px;
  height: 38px;
  display: flex;
  align-items: center;
  justify-content: center;
`;

const HRule = styled.div<{ $ml?: number }>`
  flex: none;
  width: 1px;
  height: 24px;
  margin: 7px 0 0 ${(p) => p.$ml || 0}px;
  background: #cfcfcf;
`;

const AddSheet = styled.div`
  flex: none;
  margin-left: 42px;
  width: 36px;
  height: 38px;
  display: flex;
  align-items: center;
  justify-content: center;
`;

const TabsRight = styled.div`
  margin-left: auto;
  height: 38px;
  display: flex;
  align-items: center;
  padding-right: 24px;
`;

const HTrack = styled.div`
  width: 193px;
  height: 21px;
  border-radius: 10px;
  background: #f8f8f8;
  display: flex;
  align-items: center;
  justify-content: space-between;
  padding: 0 5px;
`;

const HThumb = styled.div`
  width: 150px;
  height: 11px;
  border-radius: 5px;
  background: #757575;
`;

const TriLeft = styled.div`
  width: 0;
  height: 0;
  border-top: 6px solid transparent;
  border-bottom: 6px solid transparent;
  border-right: 8px solid #757575;
`;

const TriRight = styled(TriLeft)`
  border-right: none;
  border-left: 8px solid #757575;
`;

const StatusBar = styled.div`
  flex: none;
  height: 27px;
  background: #f5f5f5;
  border-top: 1px solid #fff;
  display: flex;
  align-items: center;
  padding-left: 14px;
  font-size: 13.3px;
`;

const StatusBold = styled.span`
  font-weight: 700;
  margin-left: 4px;
  font-size: 13.6px;
  white-space: nowrap;
`;

const StatusRight = styled.div`
  margin-left: auto;
  height: 100%;
  display: flex;
  align-items: center;
  padding-right: 18px;
`;

const ViewBtn = styled.div<{ $on?: boolean }>`
  width: 50px;
  height: 100%;
  display: flex;
  align-items: center;
  justify-content: center;
  background: ${(p) => (p.$on ? '#dedede' : 'transparent')};
  & > svg { height: 22px; }
`;

const ZoomTrack = styled.div`
  position: relative;
  width: 125px;
  height: 1px;
  background: #555;
  &::after {
    content: '';
    position: absolute;
    left: 53px;
    top: -7px;
    width: 5px;
    height: 14px;
    background: #666;
  }
  &::before {
    content: '';
    position: absolute;
    left: 63px;
    top: -3px;
    width: 1px;
    height: 7px;
    background: #555;
  }
`;

const ZoomText = styled.div`
  width: 36px;
  text-align: right;
  font-size: 12.5px;
`;

const Taskbar = styled.div`
  flex: none;
  height: 60px;
  background: #cfe4f2;
  border-top: 1.5px solid #a9bacb;
  display: grid;
  grid-template-columns: 960px 1fr auto;
  align-items: center;
`;

const WeatherArea = styled.div`
  padding-left: 28px;
  display: flex;
  align-items: center;
  gap: 8px;
`;

const WeatherIconWrap = styled.div`
  position: relative;
  line-height: 0;
`;

const Badge = styled.div`
  position: absolute;
  right: -7px;
  top: -12px;
  width: 20px;
  height: 22px;
  border-radius: 50%;
  background: #c42b1c;
  color: #fff;
  font-size: 12.5px;
  line-height: 22px;
  text-align: center;
`;

const TwoLines = styled.div`
  font-size: 14.5px;
  line-height: 20px;
  color: #222;
`;

const Dim = styled.div`
  color: #5b6670;
`;

const CenterTray = styled.div`
  display: flex;
  align-items: center;
`;

const TaskSearch = styled.div`
  flex: none;
  width: 273px;
  height: 38px;
  margin-left: 18px;
  margin-right: 16px;
  border-radius: 19px;
  background: #f1f7fb;
  border: 1px solid #bdd0df;
  display: flex;
  align-items: center;
  padding-left: 13px;
  gap: 12px;
  font-size: 16px;
  color: #444;
  & > svg:last-child { margin-left: auto; margin-right: 13px; }
`;

const TrayApp = styled.div<{ $running?: boolean }>`
  position: relative;
  flex: none;
  width: 30px;
  margin-right: 25px;
  display: flex;
  justify-content: center;
  ${(p) =>
    p.$running &&
    `&::after {
      content: '';
      position: absolute;
      left: 11px;
      bottom: -9px;
      width: 8px;
      height: 4px;
      border-radius: 2px;
      background: #6a7580;
    }`}
`;

const MicBlob = styled.div`
  position: absolute;
  left: 21px;
  top: -8px;
  width: 10px;
  height: 20px;
  border-radius: 5px;
  background: #9aa0a6;
  border: 1px solid #888;
`;

const SysTray = styled.div`
  display: flex;
  align-items: center;
  padding-right: 25px;
`;

const ClockText = styled.div`
  width: 70px;
  font-size: 15px;
  line-height: 20px;
  text-align: right;
  white-space: nowrap;
  color: #222;
  margin-left: 19px;
`;

/* ---------- data ---------- */

const MENU: [string, number][] = [
  ['File', 49], ['Home', 88], ['Insert', 46], ['Page Layout', 139], ['Formulas', 71], ['Data', 82],
  ['Review', 54], ['View', 83], ['Developer', 79], ['Help', 81], ['Acrobat', 61],
];

const COLUMNS: [string, number, number?][] = [
  ['A', 71], ['B', 143], ['C', 247], ['D', 130], ['E', 132], ['F', 130], ['G', 131], ['H', 132], ['I', 131],
  ['J', 131], ['K', 131], ['L', 131], ['M', 130], ['N', 131], ['O', 73], ['P', 72], ['Q', 71], ['R', 108],
  ['S', 72], ['T', 73], ['U', 72], ['V', 59, 12],
];

const ROW_NUMBERS = Array.from({ length: 47 }, (_, i) => 58 + i);

const RED = '#ff9aa2';
const BLUE = '#5aa7e6';

const App: React.FC = () => (
  <Screen>
    <GlobalStyle />

    <TitleBar>
      <TitleLeft>
        <ExcelLogo size={20} />
        <Fixed $w={55} $ml={20}>AutoSave</Fixed>
        <Toggle>Off</Toggle>
        <Fixed $w={20} $ml={16}><SaveIcon /></Fixed>
        <Fixed $w={18} $ml={16}><UndoIcon /></Fixed>
        <Fixed $w={16} $ml={2}><Chev color="#b5b5b5" /></Fixed>
        <Fixed $w={18} $ml={14}><UndoIcon flip /></Fixed>
        <Fixed $w={16} $ml={2}><Chev color="#b5b5b5" /></Fixed>
        <Fixed $w={16} $ml={10}><CustomizeIcon /></Fixed>
        <DocName>
          Waterfall for Assisted Living - Advanced Financing &nbsp;•&nbsp; Saved to this PC
          <Chev color="#b5b5b5" />
        </DocName>
      </TitleLeft>
      <SearchBox>
        <Search size={20} strokeWidth={1.3} color="#b4b4b4" />
        Search
      </SearchBox>
      <TitleRight>
        <Avatar>JV</Avatar>
        <WinControl><Lightbulb size={22} strokeWidth={1.2} /></WinControl>
        <WinControl><Minus size={20} strokeWidth={1.2} /></WinControl>
        <WinControl>
          <svg width="14" height="18" viewBox="0 0 14 18" fill="none" stroke="#bcbcbc" strokeWidth="1.2">
            <rect x="1" y="4" width="9" height="13" rx="2" />
            <path d="M4 1h7c1.500 0 2 1 2 2v10" />
          </svg>
        </WinControl>
        <WinControl><X size={22} strokeWidth={1.2} /></WinControl>
      </TitleRight>
    </TitleBar>

    <TabBar>
      {MENU.map(([name, w]) => (
        <MenuTab key={name} $w={w} $on={name === 'Home'}>{name}</MenuTab>
      ))}
      <TabActions>
        <CommentsButton><CommentIcon />Comments</CommentsButton>
        <ShareButton><ShareIcon />Share<Chev color="#fff" /></ShareButton>
        <PersonSlot><PersonCommentIcon /></PersonSlot>
      </TabActions>
    </TabBar>

    <Ribbon>
      <Group $w={215}>
        <GroupBody $pl={15}>
          <Large $w={50}>
            <LargeIcon><ClipboardIcon /></LargeIcon>
            <LargeText $drop>Paste</LargeText>
            <LargeChev><Chev /></LargeChev>
          </Large>
          <SmallStack>
            <SmallRow><Fixed $w={25} $ml={8}><CutIcon /></Fixed><SmallText>Cut</SmallText></SmallRow>
            <SmallRow>
              <Fixed $w={25} $ml={9}><CopyIcon /></Fixed><SmallText $w={50}>Copy</SmallText><Fixed $w={18}><Chev /></Fixed>
            </SmallRow>
            <SmallRow><Fixed $w={25} $ml={9}><PainterIcon /></Fixed><SmallText>Format Painter</SmallText></SmallRow>
          </SmallStack>
        </GroupBody>
        <GroupLabel $launch>Clipboard</GroupLabel>
        <LauncherSlot><Launcher /></LauncherSlot>
      </Group>

      <Group $w={292}>
        <GroupBody>
          <Rows>
            <CtlRow>
              <Dropdown $w={144} $ml={11}>Aptos Narrow<Chev /></Dropdown>
              <Dropdown $w={62} $ml={2}>11<Chev /></Dropdown>
              <Slot $w={32} $ml={2} $pr={6}><FontUp>A</FontUp></Slot>
              <Slot $w={32} $pr={6}><FontDown>A</FontDown></Slot>
            </CtlRow>
            <CtlRow>
              <Slot $w={32} $ml={10}><Glyph $b $size={16}>B</Glyph></Slot>
              <Slot $w={32}><Glyph $i $size={16}>I</Glyph></Slot>
              <Slot $w={32}><Glyph $u $size={16}>U</Glyph></Slot>
              <Slot $w={14}><Chev /></Slot>
              <Slot $w={13}><ThinRule /></Slot>
              <Slot $w={22}><BorderIcon /></Slot>
              <Slot $w={24}><Chev /></Slot>
              <Slot $w={2}><ThinRule /></Slot>
              <Slot $w={35}><FillIcon /></Slot>
              <Slot $w={10}><Chev /></Slot>
              <Slot $w={26} $ml={10}><ColorA>A</ColorA></Slot>
              <Slot $w={20}><Chev /></Slot>
            </CtlRow>
          </Rows>
        </GroupBody>
        <GroupLabel $launch>Font</GroupLabel>
        <LauncherSlot><Launcher /></LauncherSlot>
      </Group>

      <Group $w={373}>
        <GroupBody $pl={10}>
          <Rows>
            <CtlRow>
              <Slot $w={32}><AlignLines rows={[[4, 0], [9, 0], [14, 0]]} /></Slot>
              <Slot $w={32}><AlignLines rows={[[5, 0], [10, 0], [15, 0]]} /></Slot>
              <Slot $w={32} $active><AlignLines rows={[[7, 0], [12, 0], [17, 0]]} /></Slot>
              <Slot $w={2}><ThinRule /></Slot>
              <Slot $w={32}><OrientIcon /></Slot>
              <Slot $w={12}><Chev /></Slot>
            </CtlRow>
            <CtlRow>
              <Slot $w={32}><AlignLines rows={[[3, 5], [8, 1], [13, 5], [18, 1]]} /></Slot>
              <Slot $w={32}><AlignLines rows={[[3, 5], [8, 2], [13, 5], [18, 2]]} /></Slot>
              <Slot $w={32}><AlignLines rows={[[3, 5], [8, 3], [13, 5], [18, 3]]} /></Slot>
              <Slot $w={2}><ThinRule /></Slot>
              <Slot $w={32}><AlignLines arrow="out" rows={[[3, 5], [8, 4], [13, 4], [18, 5]]} /></Slot>
              <Slot $w={32}><AlignLines arrow="in" rows={[[3, 5], [8, 4], [13, 4], [18, 5]]} /></Slot>
            </CtlRow>
          </Rows>
          <TallRule />
          <Rows>
            <CtlRow><Slot $w={25}><WrapIcon /></Slot><SmallText>Wrap Text</SmallText></CtlRow>
            <CtlRow>
              <Slot $w={25}><MergeIcon /></Slot><SmallText $w={106}>Merge &amp; Center</SmallText><Slot $w={50}><Chev /></Slot>
            </CtlRow>
          </Rows>
        </GroupBody>
        <GroupLabel $launch>Alignment</GroupLabel>
        <LauncherSlot><Launcher /></LauncherSlot>
      </Group>

      <Group $w={200}>
        <GroupBody>
          <Rows>
            <CtlRow><Dropdown $w={178} $ml={12}>General<Chev /></Dropdown></CtlRow>
            <CtlRow>
              <Slot $w={30} $ml={10}><Glyph $size={21}>$</Glyph></Slot>
              <Slot $w={18}><Chev /></Slot>
              <Slot $w={38}><Glyph $size={21}>%</Glyph></Slot>
              <Slot $w={26}><CommaIcon /></Slot>
              <Slot $w={10}><ThinRule /></Slot>
              <Slot $w={24}>
                <svg width="22" height="24" viewBox="0 0 22 24" fill="none">
                  <path d="M10 6H1M4 3L1 6l3 3" stroke="#1e8ad8" strokeWidth="1.300" />
                  <text x="12" y="10" fontSize="12" fill="#444" fontFamily={ui}>0</text>
                  <text x="3" y="22" fontSize="12" fill="#444" fontFamily={ui}>.00</text>
                </svg>
              </Slot>
              <Slot $w={24} $ml={8}>
                <svg width="22" height="24" viewBox="0 0 22 24" fill="none">
                  <path d="M1 18h9M7 15l3 3-3 3" stroke="#1e8ad8" strokeWidth="1.300" />
                  <text x="3" y="10" fontSize="12" fill="#444" fontFamily={ui}>.00</text>
                  <text x="12" y="22" fontSize="12" fill="#444" fontFamily={ui}>0</text>
                </svg>
              </Slot>
            </CtlRow>
          </Rows>
        </GroupBody>
        <GroupLabel $launch>Number</GroupLabel>
        <LauncherSlot><Launcher /></LauncherSlot>
      </Group>

      <Group $w={491}>
        <GroupBody $pl={16}>
          <Large $w={80}>
            <LargeIcon>
              <SheetGlyph cols={4} cells={[[1, 0, RED], [1, 1, BLUE], [1, 2, RED]]} />
            </LargeIcon>
            <LargeText>Conditional</LargeText>
            <LargeText>Formatting<Chev /></LargeText>
          </Large>
          <Large $w={70} $ml={9}>
            <LargeIcon>
              <SheetGlyph cols={3} cells={[[1, 1, BLUE], [2, 1, BLUE], [1, 2, BLUE], [2, 2, BLUE]]}>
                <BrushOverlay />
              </SheetGlyph>
            </LargeIcon>
            <LargeText>Format as</LargeText>
            <LargeText>Table<Chev /></LargeText>
          </Large>
          <Gallery>
            <StyleGrid>
              <StyleChip $normal $bg="#fff" $fg="#000">Normal</StyleChip>
              <StyleChip $bg="#ffc7ce" $fg="#9c0006">Bad</StyleChip>
              <GoodChip $bg="#c6efce" $fg="#006100">Good</GoodChip>
              <StyleChip $bg="#ffeb9c" $fg="#9c5700">Neutral</StyleChip>
            </StyleGrid>
            <GalleryMore>
              <svg width="10" height="14" viewBox="0 0 10 14" fill="none" stroke="#444" strokeWidth="1.300">
                <path d="M1 1h8M1 6l4 5 4-5" />
              </svg>
            </GalleryMore>
          </Gallery>
        </GroupBody>
        <GroupLabel>Styles</GroupLabel>
      </Group>

      <Group $w={179}>
        <GroupBody $pl={10}>
          <Large $w={54}>
            <LargeIcon>
              <SheetGlyph cols={3} cells={[[1, 1, BLUE], [2, 1, BLUE], [0, 1, BLUE]]}>
                <path d="M14 14H2M7 9l-6 5 6 5" stroke="#1e8ad8" strokeWidth="1.600" fill="none" />
              </SheetGlyph>
            </LargeIcon>
            <LargeText $drop>Insert</LargeText>
            <LargeChev><Chev /></LargeChev>
          </Large>
          <Large $w={54}>
            <LargeIcon>
              <SheetGlyph cols={3} cells={[[0, 1, BLUE], [1, 1, BLUE]]}>
                <path d="M22 5l12 18M34 5L22 23" stroke="#e8453c" strokeWidth="1.600" fill="none" />
              </SheetGlyph>
            </LargeIcon>
            <LargeText $drop>Delete</LargeText>
            <LargeChev><Chev /></LargeChev>
          </Large>
          <Large $w={54}>
            <LargeIcon>
              <SheetGlyph cols={3} cells={[[1, 1, BLUE]]} />
            </LargeIcon>
            <LargeText $drop>Format</LargeText>
            <LargeChev><Chev /></LargeChev>
          </Large>
        </GroupBody>
        <GroupLabel>Cells</GroupLabel>
      </Group>

      <Group $w={267}>
        <GroupBody $pl={8}>
          <SmallStack>
            <SmallRow>
              <Fixed $w={33}><Sigma size={24} strokeWidth={1.2} color="#444" /></Fixed>
              <SmallText $w={78}>AutoSum</SmallText>
              <Fixed $w={16}><Chev /></Fixed>
            </SmallRow>
            <SmallRow>
              <Fixed $w={33}><FillDownIcon /></Fixed><SmallText>Fill<Chev /></SmallText>
            </SmallRow>
            <SmallRow>
              <Fixed $w={33}><ClearIcon /></Fixed><SmallText>Clear<Chev /></SmallText>
            </SmallRow>
          </SmallStack>
          <Large $w={70}>
            <LargeIcon><SortIcon /></LargeIcon>
            <LargeText>Sort &amp;</LargeText>
            <LargeText>Filter<Chev /></LargeText>
          </Large>
          <Large $w={46}>
            <LargeIcon><FindIcon /></LargeIcon>
            <LargeText>Find &amp;</LargeText>
            <LargeText>Select<Chev /></LargeText>
          </Large>
        </GroupBody>
        <GroupLabel>Editing</GroupLabel>
      </Group>

      <Group $w={78}>
        <GroupBody $center>
          <Large $w={70}>
            <LargeIcon><AddInsIcon /></LargeIcon>
            <LargeText>Add-ins</LargeText>
          </Large>
        </GroupBody>
        <GroupLabel>Add-ins</GroupLabel>
      </Group>

      <Group $w={133}>
        <GroupBody $pl={8}>
          <Large $w={60}>
            <LargeIcon><AnalyzeIcon /></LargeIcon>
            <LargeText>Analyze</LargeText>
            <LargeText>Data</LargeText>
          </Large>
          <Large $w={54}>
            <LargeIcon><CopilotIcon /></LargeIcon>
            <LargeText>Copilot</LargeText>
          </Large>
        </GroupBody>
        <GroupLabel>&nbsp;</GroupLabel>
      </Group>

      <Group $w={172}>
        <GroupBody $pl={6}>
          <Large $w={58}>
            <LargeIcon $nudge={10}><PdfLinkIcon /></LargeIcon>
            <LargeText>Create</LargeText>
            <LargeText>a PDF</LargeText>
          </Large>
          <Large $w={98}>
            <LargeIcon $nudge={8}><PdfLinkIcon /></LargeIcon>
            <LargeText>Create a PDF</LargeText>
            <LargeText>and Share link</LargeText>
          </Large>
        </GroupBody>
        <GroupLabel>Adobe Acrobat</GroupLabel>
      </Group>

      <Group $w={72}>
        <GroupBody $center>
          <Large $w={60}>
            <LargeIcon><SolverIcon /></LargeIcon>
            <LargeText>Solver</LargeText>
          </Large>
        </GroupBody>
        <GroupLabel>Solver</GroupLabel>
      </Group>

      <Group $w={68} $plain>
        <CollapseSlot>
          <svg width="14" height="8" viewBox="0 0 14 8" fill="none" stroke="#444" strokeWidth="1.300">
            <path d="M1 7l6-6 6 6" />
          </svg>
        </CollapseSlot>
      </Group>
    </Ribbon>

    <FormulaBar>
      <FieldBox $w={125}>R38<Chev /></FieldBox>
      <VDots $w={26}><i /></VDots>
      <FieldBox $w={107}>
        <X size={22} strokeWidth={1} color="#a8a8a8" />
        <Check size={22} strokeWidth={1} color="#a8a8a8" />
        <FxItalic>fx</FxItalic>
        <Chev color="#777" />
      </FieldBox>
      <Fixed $w={5} />
      <FieldBox><span />
        <Chev />
      </FieldBox>
    </FormulaBar>

    <SheetRow>
      <SheetMain>
        <ColHeaders>
          <Corner />
          {COLUMNS.map(([name, w, pl]) => (
            <ColHead key={name} $w={w} $pl={pl}>{name}</ColHead>
          ))}
        </ColHeaders>
        <SheetBody>
          <RowHeads>
            {ROW_NUMBERS.map((n) => (
              <RowHead key={n}>{n}</RowHead>
            ))}
          </RowHeads>
          <Canvas>
            <DscrChart />
            <CashChart
              title="LP vs GP Cumulative Cash Flow"
              box={[1114, 353, 863, 363]}
              gridX={[1205, 1959]}
              topY={358}
              step={44.3}
              max={30}
              labelX={1189}
              center0={1237}
              centerStep={68.8}
              lp={[-3.13, -2.34, -1.55, -0.64, 0.26, 1.28, 1.39, 1.5, 1.61, 1.73, 4.1]}
              gp={[-0.17, -0.17, -0.17, -0.17, 0, 0.6, 1.5, 2.52, 3.53, 4.77, 26.78]}
              catY={687}
              legendPl={123}
              legendW={333}
              legend={['Limited Partner Running Cash Position', 'General Partner Running Cash Position']}
            />
            <ReturnsChart />
            <CashChart
              title="LP vs GP Cash Flow per Year"
              box={[1114, 811, 863, 363]}
              gridX={[1203, 1959]}
              topY={817}
              step={51.85}
              max={25}
              labelX={1188}
              center0={1236}
              centerStep={68.8}
              lp={[-3.05, 0.7, 0.9, 0.8, 1, 1, 0.125, 0.125, 0.125, 0.125, 2.44]}
              gp={[-0.125, 0.125, 0.125, 0.125, 0.125, 0.6, 0.9, 1, 1.09, 1.18, 21.9]}
              catY={1146}
              legendPl={172}
              legendW={279}
              legend={['Limited Partner Total Cash Flow', 'General Partner Total Cash Flow']}
            />
            <Card><ChartTitle>Sources</ChartTitle></Card>
            <Card>
              <UsesPie />
              <ChartTitle>Uses</ChartTitle>
            </Card>
          </Canvas>
        </SheetBody>
      </SheetMain>
      <VScroll>
        <VTrack>
          <TriUp />
          <VThumb />
          <TriDown />
        </VTrack>
      </VScroll>
    </SheetRow>

    <SheetTabs>
      <NavGroup>
        <NavSlot><ChevronLeft size={20} strokeWidth={1.2} /></NavSlot>
        <NavSlot><ChevronRight size={20} strokeWidth={1.2} /></NavSlot>
      </NavGroup>
      <SheetTab $w={122} $bg="#ffffcc" $fg="#111">Assumptions</SheetTab>
      <TabRule />
      <ActiveTab>Cash Flow Detail</ActiveTab>
      <TabRule />
      <SheetTab $w={171} $bg="#7030a0" $fg="#fff">Preferred Waterfall</SheetTab>
      <HRule $ml={5} />
      <PlainTab $w={47}>L1</PlainTab>
      <HRule />
      <PlainTab $w={47}>L2</PlainTab>
      <HRule />
      <PlainTab $w={49}>L3</PlainTab>
      <HRule />
      <AddSheet><Plus size={22} strokeWidth={1.4} /></AddSheet>
      <TabsRight>
        <VDots $w={14}><i /></VDots>
        <Fixed $w={14} />
        <HTrack>
          <TriLeft />
          <HThumb />
          <TriRight />
        </HTrack>
      </TabsRight>
    </SheetTabs>

    <StatusBar>
      Ready
      <Fixed $w={18} $ml={24}><MacroIcon /></Fixed>
      <Fixed $w={18} $ml={22}><AccessIcon /></Fixed>
      <StatusBold>Accessibility: Investigate</StatusBold>
      <StatusRight>
        <ViewBtn $on><ViewGrid /></ViewBtn>
        <ViewBtn><ViewPage /></ViewBtn>
        <ViewBtn><ViewBreak /></ViewBtn>
        <Fixed $w={23}><Minus size={12} strokeWidth={1.4} /></Fixed>
        <ZoomTrack />
        <Fixed $w={20}><Plus size={13} strokeWidth={1.2} /></Fixed>
        <ZoomText>90%</ZoomText>
      </StatusRight>
    </StatusBar>

    <Taskbar>
      <WeatherArea>
        <WeatherIconWrap>
          <WeatherIcon />
          <Badge>2</Badge>
        </WeatherIconWrap>
        <TwoLines>
          26°F
          <Dim>Mostly sunny</Dim>
        </TwoLines>
      </WeatherArea>
      <CenterTray>
        <WinIcon />
        <TaskSearch>
          <Search size={20} strokeWidth={1.7} color="#222" />
          Search
          <GiftFlowers />
        </TaskSearch>
        <TrayApp><TaskView /></TrayApp>
        <TrayApp><FolderIcon /></TrayApp>
        <TrayApp $running><OperaIcon /></TrayApp>
        <TrayApp $running><ChromeIcon /><MicBlob /></TrayApp>
        <TrayApp><SnipIcon /></TrayApp>
        <TrayApp $running><ExcelLogo size={32} /></TrayApp>
      </CenterTray>
      <SysTray>
        <Fixed $w={20}>
          <svg width="14" height="8" viewBox="0 0 14 8" fill="none" stroke="#222" strokeWidth="1.400">
            <path d="M1 7l6-6 6 6" />
          </svg>
        </Fixed>
        <Fixed $w={20} $ml={21}><NetworkIcon /></Fixed>
        <Fixed $w={20} $ml={10}><SpeakerIcon /></Fixed>
        <ClockText>
          8:18 AM
          <div>1/30/2025</div>
        </ClockText>
      </SysTray>
    </Taskbar>
  </Screen>
);

export default App;
